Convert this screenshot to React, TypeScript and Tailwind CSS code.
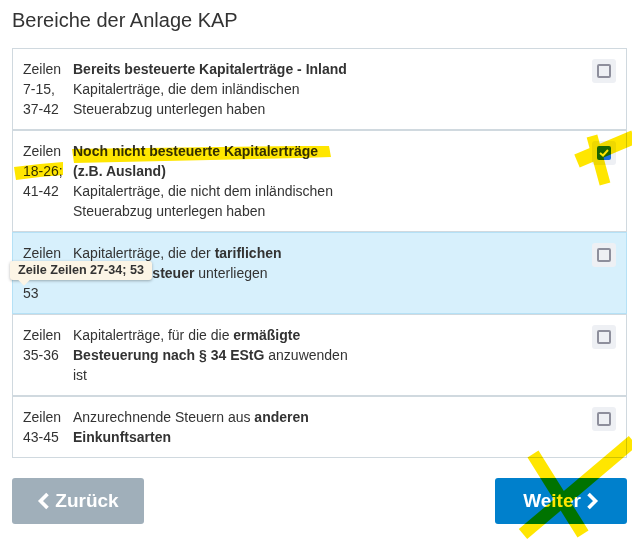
import React from "react";

type Row = {
  lines: string[];
  desc: React.ReactNode;
  checked?: boolean;
  active?: boolean;
  tooltip?: boolean;
};

function Checkbox({ checked }: { checked?: boolean }) {
  return (
    <div className="w-6 h-6 rounded-[3px] bg-[#eef0f4] flex items-center justify-center shrink-0">
      {checked ? (
        <div className="w-[14px] h-[14px] rounded-[2px] bg-[#1a6fe0] flex items-center justify-center">
          <svg width="10" height="8" viewBox="0 0 10 8">
            <polyline points="1,4 4,6.5 9,1" fill="none" stroke="#ffffff" strokeWidth="2" />
          </svg>
        </div>
      ) : (
        <div className="w-[14px] h-[14px] rounded-[2px] border-2 border-[#8e8f9c]" />
      )}
    </div>
  );
}

const rows: Row[] = [
  {
    lines: ["Zeilen", "7-15,", "37-42"],
    desc: (
      <>
        <b>Bereits besteuerte Kapitalerträge - Inland</b>
        <br />
        Kapitalerträge, die dem inländischen
        <br />
        Steuerabzug unterlegen haben
      </>
    ),
  },
  {
    lines: ["Zeilen", "18-26;", "41-42"],
    checked: true,
    desc: (
      <>
        <b>Noch nicht besteuerte Kapitalerträge</b>
        <br />
        <b>(z.B. Ausland)</b>
        <br />
        Kapitalerträge, die nicht dem inländischen
        <br />
        Steuerabzug unterlegen haben
      </>
    ),
  },
  {
    lines: ["Zeilen", "27-34;", "53"],
    active: true,
    tooltip: true,
    desc: (
      <>
        Kapitalerträge, die der <b>tariflichen</b>
        <br />
        <b>Einkommensteuer</b> unterliegen
      </>
    ),
  },
  {
    lines: ["Zeilen", "35-36"],
    desc: (
      <>
        Kapitalerträge, für die die <b>ermäßigte</b>
        <br />
        <b>Besteuerung nach § 34 EStG</b> anzuwenden
        <br />
        ist
      </>
    ),
  },
  {
    lines: ["Zeilen", "43-45"],
    desc: (
      <>
        Anzurechnende Steuern aus <b>anderen</b>
        <br />
        <b>Einkunftsarten</b>
      </>
    ),
  },
];

function Chevron({ dir }: { dir: "left" | "right" }) {
  return (
    <svg width="13" height="18" viewBox="0 0 13 18" className="shrink-0">
      {dir === "left" ? (
        <polyline points="10.5,2 3.5,9 10.5,16" fill="none" stroke="#ffffff" strokeWidth="3.6" strokeLinejoin="miter" />
      ) : (
        <polyline points="2.5,2 9.5,9 2.5,16" fill="none" stroke="#ffffff" strokeWidth="3.6" strokeLinejoin="miter" />
      )}
    </svg>
  );
}

export default function App() {
  return (
    <div className="relative w-[632px] h-[556px] bg-white text-[#333333] font-['Liberation_Sans',Arial,sans-serif] overflow-hidden">
      <div className="pl-3 pr-[5px]">
        <h1 className="pt-2 text-[20px] leading-[24px] font-normal text-[#333333]">Bereiche der Anlage KAP</h1>
        <div className="mt-4 flex flex-col">
          {rows.map((r, i) => (
            <div
              key={i}
              className={
                r.active
                  ? "relative flex border border-[#b5e1f6] bg-[#d7f0fc] px-[10px] py-[10px] text-[14px] leading-[20px]"
                  : "relative flex border border-[#d0d9df] bg-white px-[10px] py-[10px] text-[14px] leading-[20px]"
              }
            >
              <div className="w-[50px] shrink-0">
                {r.lines.map((l, j) => (
                  <div key={j}>{l}</div>
                ))}
              </div>
              <div className="flex-1">{r.desc}</div>
              <Checkbox checked={r.checked} />
              {r.tooltip && (
                <div className="absolute left-[-3px] top-[28px] h-[19px] rounded-[3px] bg-[#fcf5e6] px-2 text-[12.6px] leading-[19px] font-bold text-[#333333] shadow-[0_1px_3px_rgba(0,0,0,0.3)] whitespace-nowrap">
                  Zeile Zeilen 27-34; 53
                  <div className="absolute left-[10px] bottom-[-4px] w-2 h-2 rotate-45 bg-[#fcf5e6]" />
                </div>
              )}
            </div>
          ))}
        </div>
        <div className="mt-5 flex justify-between">
          <button className="w-[132px] h-[46px] rounded-[3px] bg-[#a0afba] text-white text-[19px] font-bold flex items-center justify-center gap-[5px]">
            <Chevron dir="left" />
            Zurück
          </button>
          <button className="w-[132px] h-[46px] rounded-[3px] bg-[#0080cc] text-white text-[19px] font-bold flex items-center justify-center gap-[5px]">
            Weiter
            <Chevron dir="right" />
          </button>
        </div>
      </div>
      <svg
        className="absolute inset-0 pointer-events-none mix-blend-multiply"
        width="632"
        height="556"
        viewBox="0 0 632 556"
      >
        <g fill="#ffe600" stroke="none">
          <polygon points="72,149 300,146 329,146 331,157 300,158 74,163" />
          <polygon points="14,167 40,164 63,162 63,175 40,177 16,180" />
        </g>
        <g stroke="#ffe600" fill="none">
          <line x1="634" y1="137" x2="577" y2="161" strokeWidth="14" />
          <line x1="592" y1="136" x2="605" y2="184" strokeWidth="11" />
          <line x1="633" y1="441" x2="523" y2="534" strokeWidth="13" />
          <line x1="533" y1="454" x2="583" y2="534" strokeWidth="13" />
        </g>
      </svg>
    </div>
  );
}
